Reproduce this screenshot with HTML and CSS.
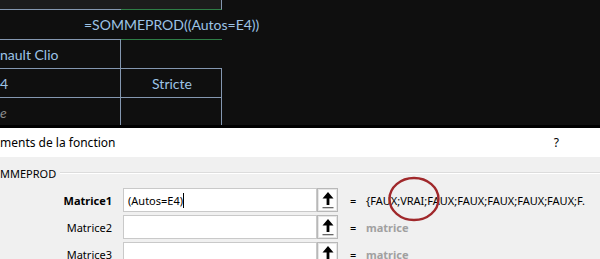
FILE: index.html
```html
<!DOCTYPE html>
<html lang="fr">
<head>
    <meta charset="UTF-8">
    <title>Arguments de la fonction</title>
    <link rel="stylesheet" href="styles.css">
</head>
<body>
    <div class="sheet">
        <div class="grid">
            <div class="cell r0 a"></div>
            <div class="cell r0 b"></div>
            <div class="cell r0 rest"></div>

            <div class="cell r1 a"><span class="formula">=SOMMEPROD((Autos=E4))</span></div>
            <div class="cell r1 b"></div>
            <div class="cell r1 rest"></div>

            <div class="cell r2 a">nault Clio</div>
            <div class="cell r2 b"></div>
            <div class="cell r2 rest"></div>

            <div class="cell r3 a">4</div>
            <div class="cell r3 b centered">Stricte</div>
            <div class="cell r3 rest"></div>

            <div class="cell r4 a faded">e</div>
            <div class="cell r4 b"></div>
            <div class="cell r4 rest"></div>
        </div>
    </div>

    <div class="dialog">
        <div class="title-bar">
            <span>ments de la fonction</span>
            <span class="help">?</span>
        </div>
        <div class="body">
            <div class="group-title">
                <span>MMEPROD</span>
                <div class="groove"></div>
            </div>

            <div class="arg-row">
                <label class="arg-label strong">Matrice1</label>
                <div class="arg-input">(Autos=E4)<span class="caret"></span></div>
                <button class="collapse-btn">
                    <svg width="14" height="18" viewBox="0 0 14 18"><path d="M7 1 L1.5 7.5 H5.6 V14 H8.4 V7.5 H12.5 Z" fill="#000"/><rect x="1.5" y="16" width="11" height="1.3" fill="#666"/></svg>
                </button>
                <span class="eq">=</span>
                <span class="arg-value">{FAUX;VRAI;FAUX;FAUX;FAUX;FAUX;FAUX;F.
                    <svg class="circle" width="52" height="46" viewBox="0 0 52 46"><ellipse cx="26" cy="23" rx="24.5" ry="21" fill="none" stroke="#a0282b" stroke-width="2.4"/></svg>
                </span>
            </div>

            <div class="arg-row">
                <label class="arg-label">Matrice2</label>
                <div class="arg-input"></div>
                <button class="collapse-btn">
                    <svg width="14" height="18" viewBox="0 0 14 18"><path d="M7 1 L1.5 7.5 H5.6 V14 H8.4 V7.5 H12.5 Z" fill="#000"/><rect x="1.5" y="16" width="11" height="1.3" fill="#666"/></svg>
                </button>
                <span class="eq">=</span>
                <span class="arg-value hint">matrice</span>
            </div>

            <div class="arg-row">
                <label class="arg-label">Matrice3</label>
                <div class="arg-input"></div>
                <button class="collapse-btn">
                    <svg width="14" height="18" viewBox="0 0 14 18"><path d="M7 1 L1.5 7.5 H5.6 V14 H8.4 V7.5 H12.5 Z" fill="#000"/><rect x="1.5" y="16" width="11" height="1.3" fill="#666"/></svg>
                </button>
                <span class="eq">=</span>
                <span class="arg-value hint">matrice</span>
            </div>
        </div>
    </div>
</body>
</html>
```

FILE: styles.css
```css
body {
    margin: 0;
    width: 600px;
    height: 259px;
    overflow: hidden;
    background: #f0f0f0;
}

.sheet {
    background: #0f0f0f;
    border-bottom: 3px solid #000;
    height: 125px;
    overflow: hidden;
}

.grid {
    display: grid;
    grid-template-columns: 121px 101px 1fr;
    grid-template-rows: 10px 30px 29px 29px 29px;
    font-family: Lato, "Open Sans", sans-serif;
    font-size: 14px;
    color: #9dc3e6;
}

.cell {
    box-sizing: border-box;
    white-space: nowrap;
    display: flex;
    align-items: center;
}

.r0.a, .r0.b {
    background: #1c1c1c;
}

.r0.a {
    border-bottom: 1px solid #8497b0;
}

.r0.b {
    border-bottom: 1px solid #2e7d46;
    border-right: 1px solid #8497b0;
}

.r1.a {
    border-bottom: 1px solid #8497b0;
    padding-left: 84px;
}

.r1.b {
    border-bottom: 1px solid #2e7d46;
}

.r2.a, .r3.a, .r4.a {
    border-right: 1px solid #8497b0;
}

.r2.a, .r2.b, .r3.a, .r3.b {
    border-bottom: 1px solid #8497b0;
}

.r3.b, .r4.b {
    border-right: 1px solid #8497b0;
}

.centered {
    justify-content: center;
    padding-left: 2px;
}

.faded {
    color: #8a8a8a;
    font-style: italic;
}

.dialog {
    font-family: "Noto Sans", "Open Sans", sans-serif;
    font-size: 11px;
    color: #000;
}

.title-bar {
    background: #fff;
    height: 29px;
    display: flex;
    align-items: center;
    justify-content: space-between;
    padding-right: 41px;
    font-size: 12px;
}

.body {
    background: #f0f0f0;
    padding-top: 7px;
}

.group-title {
    display: flex;
    align-items: center;
    gap: 4px;
    height: 18px;
}

.groove {
    flex: 1;
    height: 1px;
    background: #dcdcdc;
    border-bottom: 1px solid #fff;
}

.arg-row {
    display: flex;
    align-items: center;
    height: 24px;
    margin-top: 3px;
}

.arg-row > * {
    flex-shrink: 0;
}

.group-title + .arg-row {
    margin-top: 6px;
}

.arg-label {
    width: 112px;
    text-align: right;
    margin-right: 11px;
}

.arg-label.strong {
    font-weight: bold;
}

.arg-input {
    box-sizing: border-box;
    width: 194px;
    height: 24px;
    background: #fff;
    border: 1px solid #c9c9c9;
    padding-left: 4px;
    display: flex;
    align-items: center;
}

.caret {
    width: 1px;
    height: 15px;
    background: #000;
}

.collapse-btn {
    box-sizing: border-box;
    width: 21px;
    height: 24px;
    padding: 0;
    background: #fdfdfd;
    border: 1px solid #b8b8b8;
    box-shadow: inset 0 0 0 1px #e6e6e6;
    display: flex;
    align-items: center;
    justify-content: center;
}

.eq {
    margin-left: 12px;
    width: 16px;
}

.arg-value {
    position: relative;
    white-space: nowrap;
}

.arg-value.hint {
    color: #a0a0a0;
    font-weight: bold;
}

.circle {
    position: absolute;
    left: 22px;
    top: -17px;
}
```
